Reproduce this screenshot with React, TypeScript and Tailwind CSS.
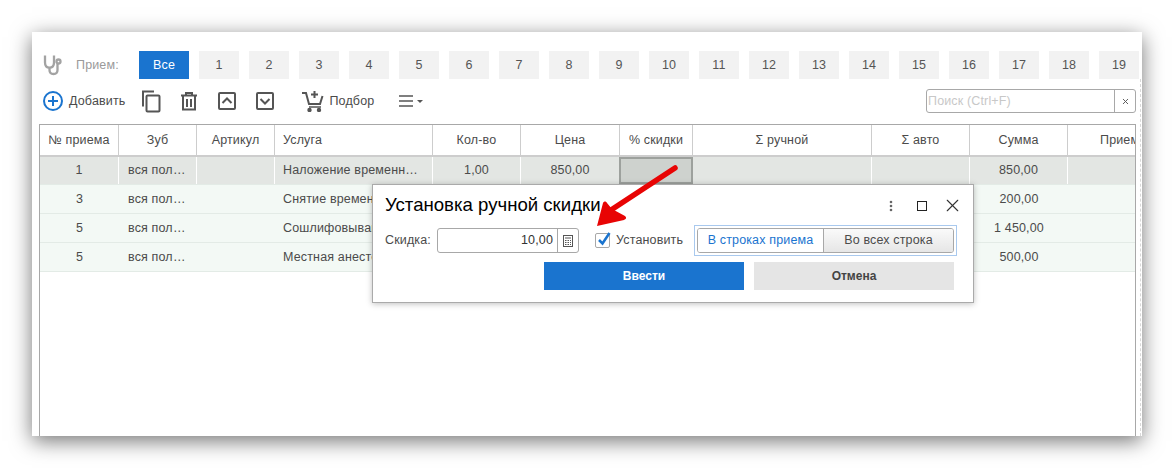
import { X } from "lucide-react";

const tabs = ["1", "2", "3", "4", "5", "6", "7", "8", "9", "10", "11", "12", "13", "14", "15", "16", "17", "18", "19"];

const gridCols = "grid grid-cols-[79px_78px_78px_158px_88px_99px_73px_179px_98px_98px_110px]";

const headers = [
  { label: "№ приема", className: "justify-center" },
  { label: "Зуб", className: "justify-center" },
  { label: "Артикул", className: "justify-center" },
  { label: "Услуга", className: "pl-2" },
  { label: "Кол-во", className: "justify-center" },
  { label: "Цена", className: "justify-center" },
  { label: "% скидки", className: "justify-center" },
  { label: "Σ ручной", className: "justify-center" },
  { label: "Σ авто", className: "justify-center" },
  { label: "Сумма", className: "justify-center" },
  { label: "Прием", className: "pl-[32px]" },
];

const rows = [
  { num: "1", service: "Наложение временной пломбы", qty: "1,00", price: "850,00", sum: "850,00" },
  { num: "3", service: "Снятие временной пломбы", qty: "", price: "", sum: "200,00" },
  { num: "5", service: "Сошлифовывание зуба", qty: "", price: "", sum: "1 450,00" },
  { num: "5", service: "Местная анестезия", qty: "", price: "", sum: "500,00" },
];

function Stethoscope() {
  return (
    <svg width="22" height="22" viewBox="0 0 22 22" fill="none" stroke="#a3a3a3" strokeWidth="2.300">
      <path d="M2 1.500v7c0 3.400 2 5.200 4.500 5.200S11 11.900 11 8.500v-7" />
      <path d="M6.500 13.700v2.300c0 2.800 1.700 4 4 4s4-1.400 4-4V10" />
      <circle cx="15.500" cy="7.500" r="2" />
    </svg>
  );
}

function ToolbarIcons() {
  return (
    <>
      <svg className="ml-[16px]" width="20" height="23" viewBox="0 0 20 23" fill="none" stroke="#555" strokeWidth="2">
        <path d="M13 1.500H2v15" />
        <rect x="5.500" y="5.500" width="13" height="16" rx="1" />
      </svg>
      <svg className="ml-[20px]" width="16" height="19" viewBox="0 0 16 19" fill="none" stroke="#555" strokeWidth="2">
        <path d="M0 3.500h16" />
        <path d="M5 3V1h6v2" />
        <path d="M2 4v13.500h12V4" />
        <path d="M6 7v8M10 7v8" />
      </svg>
      <svg className="ml-[21px]" width="18" height="18" viewBox="0 0 18 18" fill="none" stroke="#555" strokeWidth="2">
        <rect x="1" y="1" width="16" height="16" rx="1" />
        <path d="M4.500 11 9 6.500l4.500 4.500" />
      </svg>
      <svg className="ml-[20px]" width="18" height="18" viewBox="0 0 18 18" fill="none" stroke="#555" strokeWidth="2">
        <rect x="1" y="1" width="16" height="16" rx="1" />
        <path d="M4.500 7 9 11.500 13.500 7" />
      </svg>
      <svg className="ml-[28px]" width="22" height="22" viewBox="0 0 22 22" fill="none" stroke="#555" strokeWidth="2">
        <path d="M0 3h4l3 11h11l2.500-8" />
        <path d="M7 17h12" strokeWidth="1.500" />
        <path d="M12.500 1v7M9 4.500h7" />
        <circle cx="7.500" cy="20" r="1.200" fill="#555" />
        <circle cx="17" cy="20" r="1.200" fill="#555" />
      </svg>
    </>
  );
}

export default function App() {
  return (
    <div className="w-[1174px] h-[468px] bg-white pt-[32px] pl-[32px] overflow-hidden font-['Liberation_Sans',sans-serif] text-[12.5px] tracking-[0.15px] text-[#4b4b4b]">
      <div className="relative w-[1110px] h-[404px] bg-white shadow-[0_5px_20px_rgba(0,0,0,0.55)]">
        <div className="flex items-center h-[47px] pt-[19px] pl-[11px]">
          <Stethoscope />
          <span className="ml-[11px] w-[63px] text-[#9a9a9a]">Прием:</span>
          <div className="flex items-center gap-[10px]">
            <div className="flex items-center justify-center w-[50px] h-[28px] bg-[#1a74cf] text-white">Все</div>
            {tabs.map((tab) => (
              <div key={tab} className="flex items-center justify-center w-[40px] h-[28px] bg-[#f2f2f2] text-[#555]">
                {tab}
              </div>
            ))}
          </div>
        </div>

        <div className="w-[1109px] h-[357px] border-r border-dashed border-[#d8d8d8] pl-[7px]">
          <div className="flex items-center h-[45px] pl-[4px] pb-[1px]">
            <svg width="20" height="20" viewBox="0 0 20 20" fill="none" stroke="#1a74cf" strokeWidth="2">
              <circle cx="10" cy="10" r="9" />
              <path d="M10 5v10M5 10h10" />
            </svg>
            <span className="ml-[6px]">Добавить</span>
            <ToolbarIcons />
            <span className="ml-[5px]">Подбор</span>
            <svg className="ml-[25px]" width="25" height="12" viewBox="0 0 25 12" fill="none" stroke="#555" strokeWidth="1.500">
              <path d="M0 1h14M0 6h14M0 11h14" />
              <path d="M18 5h6l-3 3z" fill="#555" stroke="none" />
            </svg>
            <div className="ml-auto mr-[4px] flex items-center w-[210px] h-[24px] border border-[#a8a8a8] rounded-[3px] bg-white">
              <span className="flex-1 pl-[1px] text-[#c8c8c8]">Поиск (Ctrl+F)</span>
              <div className="flex items-center justify-center w-[21px] h-full border-l border-[#a8a8a8]">
                <X size={9} strokeWidth={2.5} color="#555" />
              </div>
            </div>
          </div>

          <div className="w-[1097px] h-[312px] border-l border-r border-t border-[#a8a8a8] overflow-hidden">
            <div className={`${gridCols} h-[32px] border-b-2 border-[#cdcdcd]`}>
              {headers.map((h) => (
                <div key={h.label} className={`flex items-center whitespace-nowrap border-r border-[#cdcdcd] ${h.className}`}>
                  {h.label}
                </div>
              ))}
            </div>
            {rows.map((row, i) => {
              const first = i === 0;
              const cell = first
                ? "flex items-center overflow-hidden border-r border-white"
                : "flex items-center overflow-hidden pt-[1px]";
              return (
                <div
                  key={i}
                  className={`${gridCols} ${first ? "h-[28px] bg-[#e3e6e3]" : "h-[29px] bg-[#f3f9f5]"} border-b border-[#e3ebe6]`}
                >
                  <div className={`${cell} justify-center`}>{row.num}</div>
                  <div className={`${cell} pl-[9px]`}>
                    <span className="truncate w-[58px]">вся полость</span>
                  </div>
                  <div className={cell}></div>
                  <div className={`${cell} pl-2`}>
                    <span className="truncate w-[135px]">{row.service}</span>
                  </div>
                  <div className={`${cell} justify-center`}>{row.qty}</div>
                  <div className={`${cell} justify-center`}>{row.price}</div>
                  <div className={first ? "-ml-px bg-[#ced2ce] border-2 border-[#9da19d]" : cell}></div>
                  <div className={cell}></div>
                  <div className={cell}></div>
                  <div className={`${cell} justify-center`}>{row.sum}</div>
                  <div className={cell}></div>
                </div>
              );
            })}
          </div>
        </div>

        {/* диалог поверх таблицы */}
        <div className="absolute left-[340px] top-[152px] w-[602px] h-[119px] bg-white border border-[#aaaaaa] shadow-[0_1px_6px_rgba(0,0,0,0.25)]">
          <div className="flex items-center h-[40px] pl-[12px] pr-[10px] pt-[1px]">
            <span className="flex-1 text-[18.6px] tracking-normal leading-none text-black">Установка ручной скидки</span>
            <svg width="4" height="12" viewBox="0 0 4 12" fill="#666">
              <circle cx="2" cy="2" r="1.300" />
              <circle cx="2" cy="6" r="1.300" />
              <circle cx="2" cy="10" r="1.300" />
            </svg>
            <div className="ml-[24px] w-[10px] h-[10px] border border-[#222]"></div>
            <X className="ml-[15px]" size={21} strokeWidth={1.3} color="#333" />
          </div>
          <div className="flex items-center h-[31px] pl-[12px]">
            <span className="w-[52px] whitespace-nowrap">Скидка:</span>
            <div className="flex w-[142px] h-[25px] border border-[#a8a8a8] rounded-[3px]">
              <span className="flex flex-1 items-center justify-end pr-[4px] text-[#333]">10,00</span>
              <div className="flex items-center justify-center w-[21px] border-l border-[#a8a8a8]">
                <svg width="10" height="12" viewBox="0 0 10 12" fill="none" stroke="#555">
                  <rect x="0.500" y="0.500" width="9" height="11" />
                  <path d="M2 3h6" />
                  <path d="M2 5.500h1.500M4.500 5.500h1.500M7 5.500h1M2 7.500h1.500M4.500 7.500h1.500M7 7.500h1M2 9.500h1.500M4.500 9.500h1.500M7 9.500h1" />
                </svg>
              </div>
            </div>
            <div className="relative ml-[16px] w-[15px] h-[15px] border border-[#a8a8a8] rounded-[2px] bg-white">
              <svg className="absolute left-[1px] -top-[3px]" width="15" height="16" viewBox="0 0 15 16" fill="none" stroke="#1a74cf" strokeWidth="2.500">
                <path d="M2 9l3.500 3.500L12.500 2" />
              </svg>
            </div>
            <span className="ml-[6px] w-[66px] whitespace-nowrap">Установить</span>
            <div className="ml-[12px] p-[2px] border border-[#a9c9ee]">
              <div className="flex w-[257px] h-[25px] border border-[#a8a8a8] rounded-[3px] overflow-hidden">
                <div className="flex items-center justify-center w-[126px] border-r border-[#a8a8a8] bg-white text-[#1a74cf] whitespace-nowrap">
                  В строках приема
                </div>
                <div className="flex flex-1 items-center justify-center bg-gradient-to-b from-[#fafafa] to-[#e6e6e6] whitespace-nowrap">
                  Во всех строка
                </div>
              </div>
            </div>
          </div>
          <div className="flex gap-[10px] pt-[6px] pl-[171px]">
            <div className="flex items-center justify-center w-[200px] h-[28px] bg-[#1a74cf] text-white font-bold text-[12px] tracking-normal">Ввести</div>
            <div className="flex items-center justify-center w-[200px] h-[28px] bg-[#e5e5e5] text-[#444] font-bold text-[12px] tracking-normal">Отмена</div>
          </div>
        </div>

        {/* стрелка-пометка */}
        <svg className="absolute left-[553px] top-[124px]" width="110" height="80" viewBox="0 0 110 80" fill="none">
          <path d="M90 12 26 54" stroke="#e80404" strokeWidth="5.500" strokeLinecap="round" />
          <path d="M12 70 18 47c1-2 3-2 4 0l5 6 13 7c2 2 1 3-1 4z" fill="#e80404" />
        </svg>
      </div>
    </div>
  );
}
